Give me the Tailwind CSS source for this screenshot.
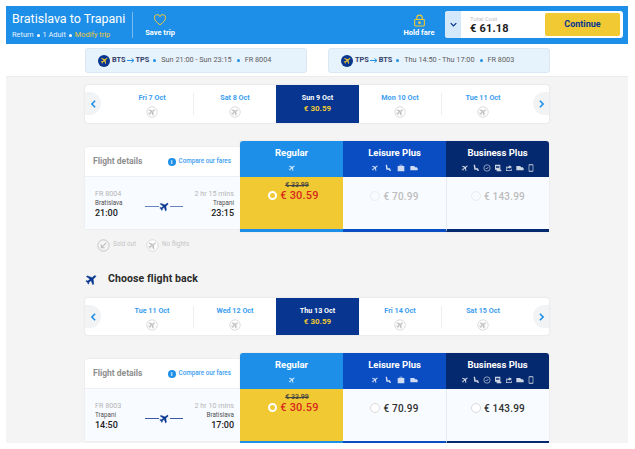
<!DOCTYPE html>
<html>
<head>
<meta charset="utf-8">
<script src="https://cdn.jsdelivr.net/npm/@tailwindcss/browser@4"></script>
</head>
<body class="bg-white font-['Roboto',sans-serif] overflow-hidden">
<svg width="0" height="0" class="absolute">
  <defs>
    <path id="pl" d="M21 16v-2l-8-5V3.5c0-.83-.67-1.5-1.5-1.5S10 2.67 10 3.5V9l-8 5v2l8-2.5V19l-2 1.5V22l3.5-1 3.5 1v-1.5L13 19v-5.5l8 2.500z"/>
    <symbol id="plane" viewBox="0 0 24 24"><use href="#pl" stroke-width="1" transform="rotate(52 12 12)"/></symbol>
    <symbol id="noflight" viewBox="0 0 24 24"><circle cx="12" cy="12" r="10.5" fill="#fff" stroke="#cfcfcf" stroke-width="1.4"/><g transform="translate(3.400 3.400) scale(.72)"><use href="#pl" fill="#bdbdbd" stroke="#bdbdbd" stroke-width="1" transform="rotate(52 12 12)"/></g><path d="M6 18 18 6" stroke="#fff" stroke-opacity=".6" stroke-width="1"/></symbol>
    <symbol id="arrow" viewBox="0 0 16 10"><path d="M0 5h13M9 1l5 4-5 4" fill="none" stroke="#1e8fe8" stroke-width="2"/></symbol>
    <symbol id="seat" viewBox="0 0 24 24"><path d="M5 2h4l2 11h7l3 8h-4l-2-4H7z"/></symbol>
    <symbol id="bag" viewBox="0 0 24 24"><path d="M8 6V2h8v4h6v16H2V6zm2 0h4V4h-4z"/></symbol>
    <symbol id="ticket" viewBox="0 0 24 24"><path d="M1 6h12l2 4h5l3 3v6H1z"/></symbol>
    <symbol id="clock" viewBox="0 0 24 24"><circle cx="12" cy="12" r="9.500" fill="none" stroke="currentColor" stroke-width="2"/><path d="M8 12l3 3 5-6" fill="none" stroke="currentColor" stroke-width="2"/></symbol>
    <symbol id="doc" viewBox="0 0 24 24"><path d="M3 2h16v15h3v5H8v-5H3zm3 4v2h10V6zm0 4v2h10v-2z"/></symbol>
    <symbol id="share" viewBox="0 0 24 24"><path d="M3 8h8v2H5v9h13v-5h2v7H3zm10-4 8 5-8 5v-3c-3 0-5 1-6 3 0-5 2-7 6-7z"/></symbol>
    <symbol id="phone" viewBox="0 0 24 24"><path d="M7 1h10a2 2 0 0 1 2 2v18a2 2 0 0 1-2 2H7a2 2 0 0 1-2-2V3a2 2 0 0 1 2-2zm0 3v16h10V4z"/></symbol>
  </defs>
</svg>

<div class="mx-[6px] mt-[6px] w-[622px] h-[437px] overflow-hidden flex flex-col">
  <!-- header -->
  <header class="h-[38px] shrink-0 bg-[#1e8fe8] flex items-center text-white">
    <div class="w-[126px] pl-[6px] shrink-0 mt-px">
      <div class="text-[12.500px] leading-[16px] whitespace-nowrap">Bratislava to Trapani</div>
      <div class="text-[7.400px] leading-[10px] mt-[3px] flex items-center gap-[3px] whitespace-nowrap text-[#e6f2fd]">Return <span class="w-[3px] h-[3px] rounded-full bg-white"></span> 1 Adult <span class="w-[3px] h-[3px] rounded-full bg-white"></span> <span class="text-[#f1c933]">Modify trip</span></div>
    </div>
    <div class="w-px h-[26px] bg-white/40"></div>
    <div class="w-[54px] flex flex-col items-center mt-[2px]">
      <svg class="w-[14px] h-[12px]" viewBox="0 0 24 22" fill="none" stroke="#f1c933" stroke-width="1.800"><path d="M12 20C6 15 2 12 2 7.500A5 5 0 0 1 12 5a5 5 0 0 1 10 2.500C22 12 18 15 12 20z"/></svg>
      <div class="text-[7.500px] font-bold leading-[10px] mt-[2px] whitespace-nowrap">Save trip</div>
    </div>
    <div class="ml-auto w-[32px] flex flex-col items-center mr-[10px] mt-[1px]">
      <svg class="w-[13px] h-[13px]" viewBox="0 0 24 24" fill="none" stroke="#f1c933" stroke-width="2"><rect x="3" y="10" width="18" height="12" rx="1.500"/><path d="M7 10V7a5 5 0 0 1 10 0v3"/><circle cx="12" cy="16" r="1.500" fill="#f1c933"/></svg>
      <div class="text-[7.500px] font-bold leading-[10px] mt-[1px] whitespace-nowrap">Hold fare</div>
    </div>
    <div class="w-[178px] h-[27px] -mt-px bg-white rounded-[3px] flex items-center overflow-hidden mr-[5px]">
      <div class="w-[16px] h-full bg-[#d3e8fa] flex items-center justify-center shrink-0">
        <svg class="w-[7px] h-[5px]" viewBox="0 0 10 6" fill="none" stroke="#073590" stroke-width="1.800"><path d="M1 1l4 4 4-4"/></svg>
      </div>
      <div class="ml-[9px] w-[75px] text-[#202020] mt-px">
        <div class="text-[6px] leading-[7px] text-[#c4c4c4]">Total Cost</div>
        <div class="text-[11px] font-bold leading-[12px] mt-px tracking-[.2px]">€ 61.18</div>
      </div>
      <div class="w-[75px] h-[23px] bg-[#f1c933] rounded-[2px] flex items-center justify-center text-[#073590] text-[9px] font-bold">Continue</div>
    </div>
  </header>

  <!-- flight pills -->
  <div class="h-[32px] shrink-0 flex items-start pl-[79px] pt-[4px] gap-[21px] bg-white">
    <div class="w-[222px] h-[25px] bg-[#e6f2fc] border border-[#d9e8f4] rounded-[3px] flex items-center pl-[12px] text-[7.300px] text-[#5d5d5d] whitespace-nowrap">
      <span class="w-[12px] h-[12px] rounded-full bg-[#073590] flex items-center justify-center mr-[2px]"><svg class="w-[9px] h-[9px] fill-[#f1c933]"><use href="#plane"/></svg></span>
      <b class="text-[#33406a] font-bold">BTS</b><svg class="w-[8px] h-[5px] mx-px"><use href="#arrow"/></svg><b class="text-[#33406a] font-bold">TPS</b>
      <span class="w-[3px] h-[3px] rounded-full bg-[#1e8fe8] ml-[4px] mr-[5px]"></span>Sun 21:00 - Sun 23:15<span class="w-[3px] h-[3px] rounded-full bg-[#1e8fe8] mx-[5px]"></span>FR 8004
    </div>
    <div class="w-[222px] h-[25px] bg-[#e6f2fc] border border-[#d9e8f4] rounded-[3px] flex items-center pl-[12px] text-[7.300px] text-[#5d5d5d] whitespace-nowrap">
      <span class="w-[12px] h-[12px] rounded-full bg-[#073590] flex items-center justify-center mr-[2px]"><svg class="w-[9px] h-[9px] fill-[#f1c933]"><use href="#plane"/></svg></span>
      <b class="text-[#33406a] font-bold">TPS</b><svg class="w-[8px] h-[5px] mx-px"><use href="#arrow"/></svg><b class="text-[#33406a] font-bold">BTS</b>
      <span class="w-[3px] h-[3px] rounded-full bg-[#1e8fe8] ml-[4px] mr-[5px]"></span>Thu 14:50 - Thu 17:00<span class="w-[3px] h-[3px] rounded-full bg-[#1e8fe8] mx-[5px]"></span>FR 8003
    </div>
  </div>

  <!-- main -->
  <main class="flex-1 bg-[#f4f4f4] border-t border-[#ececec] pl-[79px] pr-[79px] pt-[8px] overflow-hidden">
    <!-- carousel 1 -->
    <div class="h-[38px] bg-white rounded-[3px] shadow-[0_0_2px_#d5d5d5] flex relative">
      <div class="absolute left-0 top-[7px] w-[16px] h-[23px] rounded-r-full bg-[#f1f3f5] flex items-center justify-center"><svg class="w-[5px] h-[8px]" viewBox="0 0 6 10" fill="none" stroke="#1e8fe8" stroke-width="2"><path d="M5 1 1 5l4 4"/></svg></div>
      <div class="absolute right-0 top-[7px] w-[16px] h-[23px] rounded-l-full bg-[#f1f3f5] flex items-center justify-center"><svg class="w-[5px] h-[8px]" viewBox="0 0 6 10" fill="none" stroke="#1e8fe8" stroke-width="2"><path d="M1 1l4 4-4 4"/></svg></div>
      <div class="w-[82px] ml-[26px] shrink-0 flex flex-col items-center pt-[8px] text-[7.200px] font-bold leading-[10px] text-[#3b9df0] whitespace-nowrap">
        <span>Fri 7 Oct</span><svg class="w-[12px] h-[12px] mt-[3px]"><use href="#noflight"/></svg>
      </div>
      <div class="w-px h-[22px] mt-[8px] bg-[#eeeeee] shrink-0"></div>
      <div class="w-[82px] shrink-0 flex flex-col items-center pt-[8px] text-[7.200px] font-bold leading-[10px] text-[#3b9df0] whitespace-nowrap">
        <span>Sat 8 Oct</span><svg class="w-[12px] h-[12px] mt-[3px]"><use href="#noflight"/></svg>
      </div>
      <div class="w-[83px] shrink-0 bg-[#073590] flex flex-col items-center pt-[8px] text-[7.200px] font-bold leading-[10px] text-white whitespace-nowrap">
        <span>Sun 9 Oct</span><span class="font-bold text-[#f1c933] text-[8px] mt-[1px]">€ 30.59</span>
      </div>
      <div class="w-[82px] shrink-0 flex flex-col items-center pt-[8px] text-[7.200px] font-bold leading-[10px] text-[#3b9df0] whitespace-nowrap">
        <span>Mon 10 Oct</span><svg class="w-[12px] h-[12px] mt-[3px]"><use href="#noflight"/></svg>
      </div>
      <div class="w-px h-[22px] mt-[8px] bg-[#eeeeee] shrink-0"></div>
      <div class="flex-1 pr-[25px] flex flex-col items-center pt-[8px] text-[7.200px] font-bold leading-[10px] text-[#3b9df0] whitespace-nowrap">
        <span>Tue 11 Oct</span><svg class="w-[12px] h-[12px] mt-[3px]"><use href="#noflight"/></svg>
      </div>
    </div>

    <!-- fare table 1 -->
    <div class="mt-[18px] flex items-start">
      <div class="w-[155px] shrink-0 mt-[6px] bg-white rounded-l-[3px] shadow-[0_0_2px_#dddddd]">
        <div class="h-[30px] flex items-center justify-between pl-[8px] pr-[9px] border-b border-[#eef0f3]">
          <span class="text-[8.500px] font-bold text-[#8f8f8f]">Flight details</span>
          <span class="flex items-center gap-[3px] text-[6.300px] font-medium text-[#3b9df0] whitespace-nowrap"><span class="w-[8px] h-[8px] rounded-full bg-[#1e8fe8] text-white text-[6px] font-bold flex items-center justify-center">i</span>Compare our fares</span>
        </div>
        <div class="h-[52px] bg-[#f8fbff] pl-[10px] pr-[6px] pt-[12px] relative">
          <div class="flex justify-between text-[7.200px] leading-[10px] text-[#b5b5b5]"><span>FR 8004</span><span>2 hr 15 mins</span></div>
          <div class="flex justify-between text-[6.300px] leading-[9px] text-[#505050]"><span>Bratislava</span><span>Trapani</span></div>
          <div class="flex justify-between text-[9px] font-medium leading-[11px] text-[#202020]"><span>21:00</span><span>23:15</span></div>
          <div class="absolute left-[60px] top-[23px] w-[38px] h-[12px] flex items-center">
            <div class="h-px flex-1 bg-[#073590]/60"></div><svg class="w-[11px] h-[11px] fill-[#073590] stroke-[#073590]"><use href="#plane"/></svg><div class="h-px flex-1 bg-[#073590]/60"></div>
          </div>
        </div>
      </div>
      <div class="flex-1 rounded-t-[3px] overflow-hidden flex shadow-[0_0_2px_#dddddd]">
        <div class="w-[103px] shrink-0">
          <div class="h-[36px] bg-[#1e8fe8] flex flex-col items-center pt-[6px] text-white"><span class="text-[9.500px] font-bold leading-[12px]">Regular</span><svg class="w-[8px] h-[8px] mt-[5px] fill-white/80"><use href="#plane"/></svg></div>
          <div class="h-[55px] bg-[#f1c933] border-b-[3px] border-[#1e8fe8] flex flex-col items-center pt-[4px]">
            <s class="text-[7px] leading-[8px] text-[#444] font-medium pl-[11px]">€ 33.99</s>
            <div class="flex items-center gap-[3px] pl-[4px]"><span class="w-[9px] h-[9px] rounded-full border-2 border-white"></span><span class="text-[11px] leading-[13px] font-medium text-[#d7281c] tracking-[.2px]">€ 30.59</span></div>
          </div>
        </div>
        <div class="w-[103px] shrink-0">
          <div class="h-[36px] bg-[#0a4cc2] flex flex-col items-center pt-[6px] text-white"><span class="text-[9.500px] font-bold leading-[12px]">Leisure Plus</span>
            <div class="flex gap-[5px] mt-[5px] fill-white/80"><svg class="w-[8px] h-[8px]"><use href="#plane"/></svg><svg class="w-[8px] h-[8px]"><use href="#seat"/></svg><svg class="w-[8px] h-[8px]"><use href="#bag"/></svg><svg class="w-[8px] h-[8px]"><use href="#ticket"/></svg></div>
          </div>
          <div class="h-[55px] bg-[#f8fbff] border-b-[3px] border-[#0a4cc2] flex justify-center pt-[13px] gap-[3px]"><span class="w-[10px] h-[10px] mt-px rounded-full border border-[#ededed]"></span><span class="text-[10px] leading-[13px] font-medium text-[#bdbdbd] tracking-[.2px]">€ 70.99</span></div>
        </div>
        <div class="flex-1">
          <div class="h-[36px] bg-[#05296f] flex flex-col items-center pt-[6px] text-white"><span class="text-[9.500px] font-bold leading-[12px]">Business Plus</span>
            <div class="flex gap-[3px] mt-[5px] fill-white/80 text-white/80"><svg class="w-[8px] h-[8px]"><use href="#plane"/></svg><svg class="w-[8px] h-[8px]"><use href="#seat"/></svg><svg class="w-[8px] h-[8px]"><use href="#clock"/></svg><svg class="w-[8px] h-[8px]"><use href="#doc"/></svg><svg class="w-[8px] h-[8px]"><use href="#share"/></svg><svg class="w-[8px] h-[8px]"><use href="#ticket"/></svg><svg class="w-[8px] h-[8px]"><use href="#phone"/></svg></div>
          </div>
          <div class="h-[55px] bg-[#f8fbff] border-l border-[#e8ecf2] border-b-[3px] border-b-[#05296f] flex justify-center pt-[13px] gap-[3px]"><span class="w-[10px] h-[10px] mt-px rounded-full border border-[#ededed]"></span><span class="text-[10px] leading-[13px] font-medium text-[#bdbdbd] tracking-[.2px]">€ 143.99</span></div>
        </div>
      </div>
    </div>

    <!-- legend -->
    <div class="mt-[6px] ml-[12px] h-[14px] flex items-center text-[6.300px] text-[#c4c4c4] whitespace-nowrap">
      <svg class="w-[13px] h-[13px] mr-[3px]" viewBox="0 0 24 24" fill="none" stroke="#bdbdbd" stroke-width="1.500"><circle cx="12" cy="12" r="10.500"/><path d="M17 7 8 16M8 10v6h6" stroke-width="2"/></svg>Sold out
      <svg class="w-[13px] h-[13px] ml-[10px] mr-[3px]"><use href="#noflight"/></svg>No flights
    </div>

    <!-- title -->
    <div class="mt-[20px] h-[14px] flex items-center text-[#2b2b2b]">
      <svg class="w-[13px] h-[13px] fill-[#073590] stroke-[#073590]"><use href="#plane"/></svg>
      <span class="ml-[10px] text-[10.500px] font-bold whitespace-nowrap tracking-[.1px]">Choose flight back</span>
    </div>

    <!-- carousel 2 -->
    <div class="mt-[12px] h-[37px] bg-white rounded-[3px] shadow-[0_0_2px_#d5d5d5] flex relative">
      <div class="absolute left-0 top-[7px] w-[16px] h-[23px] rounded-r-full bg-[#f1f3f5] flex items-center justify-center"><svg class="w-[5px] h-[8px]" viewBox="0 0 6 10" fill="none" stroke="#1e8fe8" stroke-width="2"><path d="M5 1 1 5l4 4"/></svg></div>
      <div class="absolute right-0 top-[7px] w-[16px] h-[23px] rounded-l-full bg-[#f1f3f5] flex items-center justify-center"><svg class="w-[5px] h-[8px]" viewBox="0 0 6 10" fill="none" stroke="#1e8fe8" stroke-width="2"><path d="M1 1l4 4-4 4"/></svg></div>
      <div class="w-[82px] ml-[26px] shrink-0 flex flex-col items-center pt-[8px] text-[7.200px] font-bold leading-[10px] text-[#3b9df0] whitespace-nowrap">
        <span>Tue 11 Oct</span><svg class="w-[12px] h-[12px] mt-[3px]"><use href="#noflight"/></svg>
      </div>
      <div class="w-px h-[22px] mt-[8px] bg-[#eeeeee] shrink-0"></div>
      <div class="w-[82px] shrink-0 flex flex-col items-center pt-[8px] text-[7.200px] font-bold leading-[10px] text-[#3b9df0] whitespace-nowrap">
        <span>Wed 12 Oct</span><svg class="w-[12px] h-[12px] mt-[3px]"><use href="#noflight"/></svg>
      </div>
      <div class="w-[83px] shrink-0 bg-[#073590] flex flex-col items-center pt-[8px] text-[7.200px] font-bold leading-[10px] text-white whitespace-nowrap">
        <span>Thu 13 Oct</span><span class="font-bold text-[#f1c933] text-[8px] mt-[1px]">€ 30.59</span>
      </div>
      <div class="w-[82px] shrink-0 flex flex-col items-center pt-[8px] text-[7.200px] font-bold leading-[10px] text-[#3b9df0] whitespace-nowrap">
        <span>Fri 14 Oct</span><svg class="w-[12px] h-[12px] mt-[3px]"><use href="#noflight"/></svg>
      </div>
      <div class="w-px h-[22px] mt-[8px] bg-[#eeeeee] shrink-0"></div>
      <div class="flex-1 pr-[25px] flex flex-col items-center pt-[8px] text-[7.200px] font-bold leading-[10px] text-[#3b9df0] whitespace-nowrap">
        <span>Sat 15 Oct</span><svg class="w-[12px] h-[12px] mt-[3px]"><use href="#noflight"/></svg>
      </div>
    </div>

    <!-- fare table 2 -->
    <div class="mt-[18px] flex items-start">
      <div class="w-[155px] shrink-0 mt-[6px] bg-white rounded-l-[3px] shadow-[0_0_2px_#dddddd]">
        <div class="h-[30px] flex items-center justify-between pl-[8px] pr-[9px] border-b border-[#eef0f3]">
          <span class="text-[8.500px] font-bold text-[#8f8f8f]">Flight details</span>
          <span class="flex items-center gap-[3px] text-[6.300px] font-medium text-[#3b9df0] whitespace-nowrap"><span class="w-[8px] h-[8px] rounded-full bg-[#1e8fe8] text-white text-[6px] font-bold flex items-center justify-center">i</span>Compare our fares</span>
        </div>
        <div class="h-[52px] bg-[#f8fbff] pl-[10px] pr-[6px] pt-[12px] relative">
          <div class="flex justify-between text-[7.200px] leading-[10px] text-[#b5b5b5]"><span>FR 8003</span><span>2 hr 10 mins</span></div>
          <div class="flex justify-between text-[6.300px] leading-[9px] text-[#505050]"><span>Trapani</span><span>Bratislava</span></div>
          <div class="flex justify-between text-[9px] font-medium leading-[11px] text-[#202020]"><span>14:50</span><span>17:00</span></div>
          <div class="absolute left-[60px] top-[23px] w-[38px] h-[12px] flex items-center">
            <div class="h-px flex-1 bg-[#073590]/80"></div><svg class="w-[11px] h-[11px] fill-[#073590] stroke-[#073590]"><use href="#plane"/></svg><div class="h-px flex-1 bg-[#073590]/80"></div>
          </div>
        </div>
      </div>
      <div class="flex-1 rounded-t-[3px] overflow-hidden flex shadow-[0_0_2px_#dddddd]">
        <div class="w-[103px] shrink-0">
          <div class="h-[36px] bg-[#1e8fe8] flex flex-col items-center pt-[6px] text-white"><span class="text-[9.500px] font-bold leading-[12px]">Regular</span><svg class="w-[8px] h-[8px] mt-[5px] fill-white/80"><use href="#plane"/></svg></div>
          <div class="h-[55px] bg-[#f1c933] border-b-[3px] border-[#1e8fe8] flex flex-col items-center pt-[4px]">
            <s class="text-[7px] leading-[8px] text-[#444] font-medium pl-[11px]">€ 33.99</s>
            <div class="flex items-center gap-[3px] pl-[4px]"><span class="w-[9px] h-[9px] rounded-full border-2 border-white"></span><span class="text-[11px] leading-[13px] font-medium text-[#d7281c] tracking-[.2px]">€ 30.59</span></div>
          </div>
        </div>
        <div class="w-[103px] shrink-0">
          <div class="h-[36px] bg-[#0a4cc2] flex flex-col items-center pt-[6px] text-white"><span class="text-[9.500px] font-bold leading-[12px]">Leisure Plus</span>
            <div class="flex gap-[5px] mt-[5px] fill-white/80"><svg class="w-[8px] h-[8px]"><use href="#plane"/></svg><svg class="w-[8px] h-[8px]"><use href="#seat"/></svg><svg class="w-[8px] h-[8px]"><use href="#bag"/></svg><svg class="w-[8px] h-[8px]"><use href="#ticket"/></svg></div>
          </div>
          <div class="h-[55px] bg-[#f8fbff] border-b-[3px] border-[#0a4cc2] flex justify-center pt-[13px] gap-[3px]"><span class="w-[10px] h-[10px] mt-px rounded-full bg-white border border-[#d9d9d9]"></span><span class="text-[10px] leading-[13px] font-medium text-[#303030] tracking-[.2px]">€ 70.99</span></div>
        </div>
        <div class="flex-1">
          <div class="h-[36px] bg-[#05296f] flex flex-col items-center pt-[6px] text-white"><span class="text-[9.500px] font-bold leading-[12px]">Business Plus</span>
            <div class="flex gap-[3px] mt-[5px] fill-white/80 text-white/80"><svg class="w-[8px] h-[8px]"><use href="#plane"/></svg><svg class="w-[8px] h-[8px]"><use href="#seat"/></svg><svg class="w-[8px] h-[8px]"><use href="#clock"/></svg><svg class="w-[8px] h-[8px]"><use href="#doc"/></svg><svg class="w-[8px] h-[8px]"><use href="#share"/></svg><svg class="w-[8px] h-[8px]"><use href="#ticket"/></svg><svg class="w-[8px] h-[8px]"><use href="#phone"/></svg></div>
          </div>
          <div class="h-[55px] bg-[#f8fbff] border-l border-[#e8ecf2] border-b-[3px] border-b-[#05296f] flex justify-center pt-[13px] gap-[3px]"><span class="w-[10px] h-[10px] mt-px rounded-full bg-white border border-[#d9d9d9]"></span><span class="text-[10px] leading-[13px] font-medium text-[#303030] tracking-[.2px]">€ 143.99</span></div>
        </div>
      </div>
    </div>
  </main>
</div>
</body>
</html>
